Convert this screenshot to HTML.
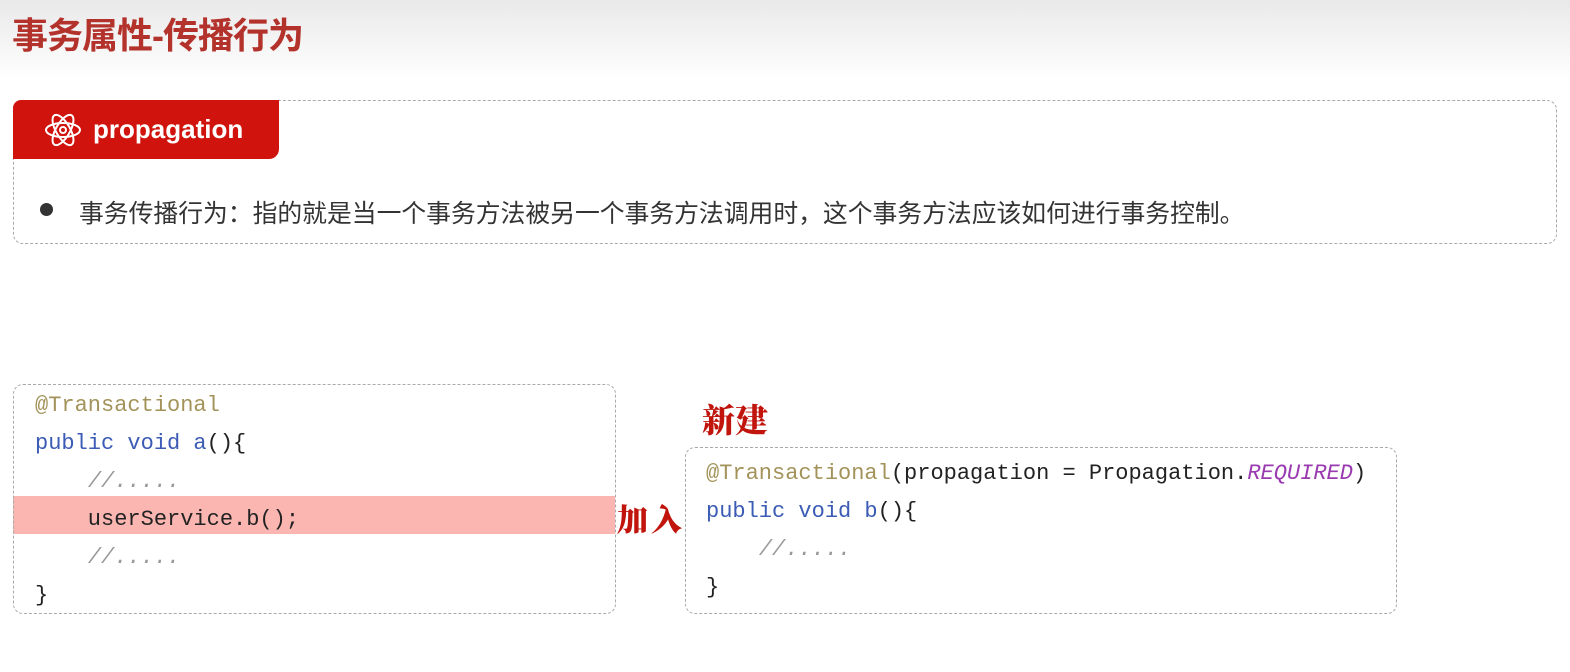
<!DOCTYPE html>
<html><head><meta charset="utf-8"><style>
body{margin:0;width:1570px;height:672px;background:#fff;position:relative;overflow:hidden;font-family:"Liberation Sans","Noto Sans CJK SC",sans-serif}
.hdr{position:absolute;left:0;top:0;width:1570px;height:80px;background:linear-gradient(#e9e9e9,#fff)}
.title{position:absolute;left:12px;top:7px;font-size:36px;font-weight:bold;color:#b3322b;letter-spacing:-1px}
.box{position:absolute;border:1.5px dashed #aaa;border-radius:10px}
.tab{position:absolute;left:13px;top:100px;width:266px;height:59px;background:#d0130c;border-radius:8px 0 10px 0;color:#fff;font-weight:bold;font-size:26px}
.code{position:absolute;font-family:"Liberation Mono",monospace;font-size:22px;white-space:pre;line-height:38px;color:#222}
.kw{color:#3b5bb5}.an{color:#a3935a}.cm{color:#999;font-style:italic}.it{color:#9a3ab0;font-style:italic}
.hand{position:absolute;color:#c0140c;font-weight:900;font-family:"Noto Serif CJK SC",serif}
</style></head><body>
<div class="hdr"></div>
<div class="title">事务属性-传播行为</div>
<div class="box" style="left:13px;top:100px;width:1542px;height:142px"></div>
<div class="tab">
<svg style="position:absolute;left:30px;top:10px" width="40" height="40" viewBox="0 0 40 40" fill="none" stroke="#fff" stroke-width="2"><ellipse cx="20" cy="20" rx="17" ry="7"/><ellipse cx="20" cy="20" rx="17" ry="7" transform="rotate(60 20 20)"/><ellipse cx="20" cy="20" rx="17" ry="7" transform="rotate(120 20 20)"/><circle cx="20" cy="20" r="3"/></svg>
<span style="position:absolute;left:80px;top:14px">propagation</span></div>
<div style="position:absolute;left:40px;top:203px;width:13px;height:13px;border-radius:50%;background:#333"></div>
<div style="position:absolute;left:79px;top:194px;font-size:24.8px;color:#333;white-space:nowrap">事务传播行为：指的就是当一个事务方法被另一个事务方法调用时，这个事务方法应该如何进行事务控制。</div>

<div style="position:absolute;left:13px;top:496px;width:602px;height:38px;background:#fbb6b1"></div>
<div class="box" style="left:13px;top:384px;width:601px;height:228px"></div>
<div class="code" style="left:35px;top:387px"><span class="an">@Transactional</span>
<span class="kw">public void a</span>(){
    <span class="cm">//.....</span>
    userService.b();
    <span class="cm">//.....</span>
}</div>

<div class="box" style="left:685px;top:447px;width:710px;height:165px"></div>
<div class="code" style="left:706px;top:455px"><span class="an">@Transactional</span>(propagation = Propagation.<span class="it">REQUIRED</span>)
<span class="kw">public void b</span>()<span>{</span>
    <span class="cm">//.....</span>
}</div>
<div class="hand" style="left:702px;top:395px;font-size:33px">新建</div>
<div class="hand" style="left:617px;top:495px;font-size:31px;letter-spacing:3px">加入</div>
</body></html>
